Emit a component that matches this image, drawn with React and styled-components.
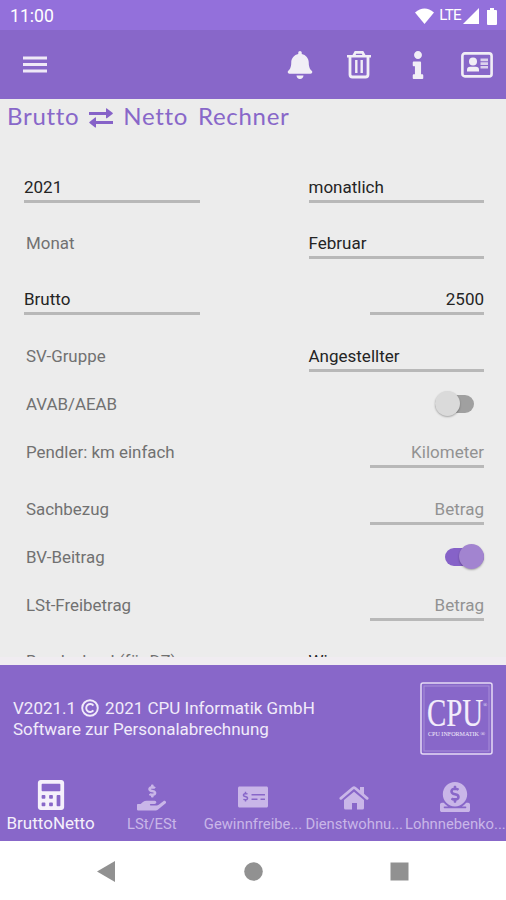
import React, { useState } from "react";
import styled, { createGlobalStyle } from "styled-components";
import {
  FaBell,
  FaCalculator,
  FaDonate,
  FaHandHoldingUsd,
  FaInfo,
  FaMoneyCheckAlt,
} from "react-icons/fa";

const GlobalStyle = createGlobalStyle`
  * {
    box-sizing: border-box;
  }

  body {
    margin: 0;
    font-family: Roboto, "Liberation Sans", sans-serif;
    background: #ececec;
  }
`;

const Screen = styled.div`
  display: flex;
  flex-direction: column;
  width: 506px;
  height: 900px;
  overflow: hidden;
  background: #ececec;
`;

const StatusBar = styled.div`
  display: flex;
  align-items: center;
  justify-content: space-between;
  flex: none;
  height: 30px;
  padding: 2px 8px 0 10px;
  background: #9370db;
  color: #fff;
  font-size: 17.6px;
`;

const StatusIcons = styled.div`
  display: flex;
  align-items: center;
  font-size: 15px;

  svg {
    display: block;
  }
`;

const Network = styled.span`
  margin: -2px 2px 0 5px;
  font-size: 15.2px;
  letter-spacing: -0.7px;
`;

const Toolbar = styled.header`
  display: flex;
  align-items: center;
  justify-content: space-between;
  flex: none;
  height: 69px;
  padding: 0 0 0 23px;
  background: #8867c9;
`;

const Actions = styled.div`
  display: flex;
  align-items: center;
`;

const IconButton = styled.button`
  display: flex;
  align-items: center;
  justify-content: center;
  width: ${(p) => p.$width || 59}px;
  height: 40px;
  padding: 0;
  border: 0;
  background: none;
  color: #f1eef6;
`;

const Title = styled.h1`
  display: flex;
  align-items: center;
  flex: none;
  height: 60px;
  margin: 0;
  padding: 0 7px 28px;
  color: #8867c9;
  font-family: Lato, sans-serif;
  font-size: 24px;
  font-weight: 400;
  white-space: pre;

  svg {
    margin: 5px 9px 0;
  }
`;

const Word = styled.span`
  letter-spacing: 0.7px;
  word-spacing: 3px;
`;

const Form = styled.main`
  flex: none;
  height: 498px;
  margin-top: -0.3px;
  margin-bottom: 0.3px;
  overflow: hidden;
`;

const Row = styled.div`
  display: flex;
  align-items: center;
  justify-content: space-between;
  height: ${(p) => (p.$compact ? 40.2 : 56.3)}px;
  padding: 0 22px 0 24px;
`;

const Label = styled.span`
  padding-left: 2px;
  color: #717171;
  font-size: 16.9px;
  line-height: 20px;
  white-space: nowrap;
`;

const Field = styled.div`
  width: ${(p) => (p.$narrow ? 114 : 175.5)}px;
  padding: 6px 0 3px;
  border-bottom: 3px solid #b8b8b8;
  color: ${(p) => (p.$placeholder ? "#929292" : "#242424")};
  font-size: 17px;
  line-height: 20px;
  text-align: ${(p) => (p.$narrow ? "right" : "left")};
`;

const Track = styled.button`
  display: flex;
  align-items: center;
  justify-content: ${(p) => (p.$on ? "flex-end" : "flex-start")};
  width: 39px;
  height: 18px;
  margin-right: ${(p) => (p.$on ? 0 : 10)}px;
  padding: 0;
  border: 0;
  border-radius: 9px;
  background: ${(p) => (p.$on ? "#8662c8" : "#a0a0a0")};
`;

const Thumb = styled.span`
  flex: none;
  width: 25px;
  height: 25px;
  border-radius: 50%;
  background: ${(p) => (p.$on ? "#a284d0" : "#dadada")};
  box-shadow: 0 1px 2px rgba(0, 0, 0, 0.3);
`;

const Divider = styled.div`
  flex: none;
  height: 8px;
  background: #f0ecf1;
`;

const Imprint = styled.footer`
  display: flex;
  align-items: center;
  justify-content: space-between;
  flex: none;
  height: 107px;
  padding: 0 13px;
  background: #8867c9;
  color: #f1ebfa;
  font-size: 17px;
  line-height: 21px;
`;

const Line = styled.div`
  display: flex;
  align-items: center;

  svg {
    margin: 0 6px 0 5px;
  }
`;

const Logo = styled.svg`
  display: block;
  font-family: "Liberation Serif", serif;
`;

const Tabs = styled.nav`
  display: grid;
  grid-template-columns: repeat(5, 1fr);
  flex: none;
  height: 69px;
  background: #8867c9;
`;

const Tab = styled.button`
  display: flex;
  flex-direction: column;
  align-items: center;
  min-width: 0;
  padding: 0;
  border: 0;
  background: none;
  color: ${(p) => (p.$active ? "#f5f0fb" : "#c9b6e8")};
  font-family: inherit;
`;

const TabIcon = styled.span`
  display: flex;
  align-items: center;
  height: 34px;
  padding-top: ${(p) => (p.$active ? 0 : 4)}px;
  margin-top: 6px;
`;

const TabLabel = styled.span`
  font-size: ${(p) => (p.$active ? 17 : 14.8)}px;
  line-height: ${(p) => (p.$active ? 22 : 24)}px;
  white-space: nowrap;
`;

const SystemNav = styled.div`
  display: flex;
  align-items: center;
  justify-content: space-between;
  flex: none;
  height: 59px;
  padding: 1px 97px 0;
  background: #fff;
`;

const MenuIcon = () => (
  <svg width="24" height="18" viewBox="0 0 24 18" fill="#efe9f7">
    <path d="M0 0.5h24v3H0zM0 7h24v3H0zM0 13.5h24v3H0z" />
  </svg>
);

const TrashIcon = () => (
  <svg width="26" height="29" viewBox="0 0 26 29" fill="none" stroke="currentColor">
    <path d="M1 6.300h24M7.500 6l2-3.600h7l2 3.600" strokeWidth="2.600" />
    <path d="M4 7v17.500q0 2.500 2.500 2.500h13q2.500 0 2.500-2.500V7" strokeWidth="2.800" />
    <path d="M10.300 10v13M15.700 10v13" strokeWidth="2.400" />
  </svg>
);

const CardIcon = () => (
  <svg width="32" height="26" viewBox="0 0 32 26" fill="currentColor">
    <rect x="1.400" y="1.400" width="29.200" height="23" rx="2.500" fill="none" stroke="currentColor" strokeWidth="2.600" />
    <circle cx="12" cy="9.500" r="4" />
    <path d="M6 19.500v-1.800q0-3 3.200-3h5.600q3.200 0 3.200 3v1.800z" />
    <path d="M19.500 6.500h7.500v2.800h-7.500zM19.500 10.300h7.500v2.600h-7.500zM19.500 13.900h7.500v2.600h-7.500z" opacity=".8" />
  </svg>
);

const SwapIcon = () => (
  <svg width="26" height="20" viewBox="0 0 26 20" fill="#8662c8">
    <path d="M1 4h17V.8q0-1 .9-.4l5.600 4.400q.7.600 0 1.200l-5.600 4.200q-.9.500-.9-.5V7H1z" />
    <path d="M25 13H8V9.900q0-1-.9-.4l-5.600 4.400q-.7.600 0 1.200l5.600 4.300q.9.500.9-.5V16h17z" />
  </svg>
);

const HouseIcon = () => (
  <svg width="30" height="25" viewBox="0 0 30 25" fill="currentColor">
    <path d="M15 6.800 25 15v8q0 1.500-1.500 1.500H18v-6.500h-5v6.500H6.500Q5 24.500 5 23v-8z" />
    <path d="M1.800 13.400 14 3q1-.8 2 0l12.200 10.400" fill="none" stroke="currentColor" strokeWidth="2.700" strokeLinecap="round" />
    <path d="M21 2h4v8l-4-3.500z" />
  </svg>
);

const CopyrightIcon = () => (
  <svg width="18" height="18" viewBox="0 0 18 18" fill="none" stroke="currentColor" strokeWidth="1.900">
    <circle cx="9" cy="9" r="7.800" />
    <path d="M12.400 6.600a4 4 0 1 0 0 4.800" />
  </svg>
);

const CpuLogo = () => (
  <Logo width="73" height="73" viewBox="0 0 73 73" fill="#f3edfb">
    <rect x="1" y="1" width="71" height="71" rx="2" fill="none" stroke="#e5daf5" strokeWidth="1.500" />
    <rect x="4" y="4" width="65" height="65" fill="none" stroke="#a88fd9" strokeWidth="1" />
    <text x="7" y="44" fontSize="40" textLength="60" lengthAdjust="spacingAndGlyphs" stroke="#f3edfb" strokeWidth=".2">
      CPU
      <tspan fontSize="7" dy="-19" strokeWidth="0">®</tspan>
    </text>
    <text x="8" y="54" fontSize="7" textLength="57" lengthAdjust="spacingAndGlyphs">CPU INFORMATIK ®</text>
  </Logo>
);

const rows = [
  { field: "2021", value: "monatlich" },
  { label: "Monat", value: "Februar" },
  { field: "Brutto", value: "2500", narrow: true },
  { label: "SV-Gruppe", value: "Angestellter" },
  { label: "AVAB/AEAB", toggle: "avab" },
  { label: "Pendler: km einfach", value: "Kilometer", narrow: true, placeholder: true },
  { label: "Sachbezug", value: "Betrag", narrow: true, placeholder: true },
  { label: "BV-Beitrag", toggle: "bv" },
  { label: "LSt-Freibetrag", value: "Betrag", narrow: true, placeholder: true },
  { label: "Bundesland (für DZ)", value: "Wien" },
];

const tabs = [
  { label: "BruttoNetto", icon: <FaCalculator size={30} /> },
  { label: "LSt/ESt", icon: <FaHandHoldingUsd size={29} /> },
  { label: "Gewinnfreibe...", icon: <FaMoneyCheckAlt size={30} /> },
  { label: "Dienstwohnu...", icon: <HouseIcon /> },
  { label: "Lohnnebenko...", icon: <FaDonate size={30} /> },
];

const App = () => {
  const [switches, setSwitches] = useState({ avab: false, bv: true });
  const [activeTab, setActiveTab] = useState(0);

  const onToggle = (name) => {
    setSwitches({ ...switches, [name]: !switches[name] });
  };

  return (
    <Screen>
      <GlobalStyle />
      <StatusBar>
        <span>11:00</span>
        <StatusIcons>
          <svg width="19" height="16" viewBox="0 0 19 16" fill="#fff">
            <path d="M0 4.500Q9.500-3.500 19 4.500L9.500 16z" />
          </svg>
          <Network>LTE</Network>
          <svg width="16" height="16" viewBox="0 0 16 16" fill="#fff">
            <path d="M16 0v16H0z" />
          </svg>
          <svg width="19" height="17" viewBox="0 0 19 17" fill="#fff">
            <path d="M8 2h3V0h4v2h2q1 0 1 1v13q0 1-1 1H9q-1 0-1-1z" />
          </svg>
        </StatusIcons>
      </StatusBar>
      <Toolbar>
        <IconButton $width={24}>
          <MenuIcon />
        </IconButton>
        <Actions>
          <IconButton>
            <FaBell size={28} />
          </IconButton>
          <IconButton>
            <TrashIcon />
          </IconButton>
          <IconButton>
            <FaInfo size={28} />
          </IconButton>
          <IconButton>
            <CardIcon />
          </IconButton>
        </Actions>
      </Toolbar>
      <Title>
        <Word>Brutto</Word>
        <SwapIcon />
        <Word>Netto Rechner</Word>
      </Title>
      <Form>
        {rows.map((row, i) => (
          <Row key={i} $compact={!!row.toggle}>
            {row.field ? <Field>{row.field}</Field> : <Label>{row.label}</Label>}
            {row.toggle ? (
              <Track $on={switches[row.toggle]} onClick={() => onToggle(row.toggle)}>
                <Thumb $on={switches[row.toggle]} />
              </Track>
            ) : (
              <Field $narrow={row.narrow} $placeholder={row.placeholder}>
                {row.value}
              </Field>
            )}
          </Row>
        ))}
      </Form>
      <Divider />
      <Imprint>
        <div>
          <Line>
            V2021.1
            <CopyrightIcon />
            2021 CPU Informatik GmbH
          </Line>
          <Line>Software zur Personalabrechnung</Line>
        </div>
        <CpuLogo />
      </Imprint>
      <Tabs>
        {tabs.map((tab, i) => (
          <Tab key={tab.label} $active={i === activeTab} onClick={() => setActiveTab(i)}>
            <TabIcon $active={i === activeTab}>{tab.icon}</TabIcon>
            <TabLabel $active={i === activeTab}>{tab.label}</TabLabel>
          </Tab>
        ))}
      </Tabs>
      <SystemNav>
        <svg width="19" height="21" viewBox="0 0 19 21" fill="#919191">
          <path d="M18 0v21L0 10.500z" />
        </svg>
        <svg width="19" height="19" viewBox="0 0 19 19" fill="#919191">
          <circle cx="9.500" cy="9.500" r="9.300" />
        </svg>
        <svg width="19" height="19" viewBox="0 0 19 19" fill="#919191">
          <rect x=".5" y=".5" width="18" height="18" />
        </svg>
      </SystemNav>
    </Screen>
  );
};

export default App;
